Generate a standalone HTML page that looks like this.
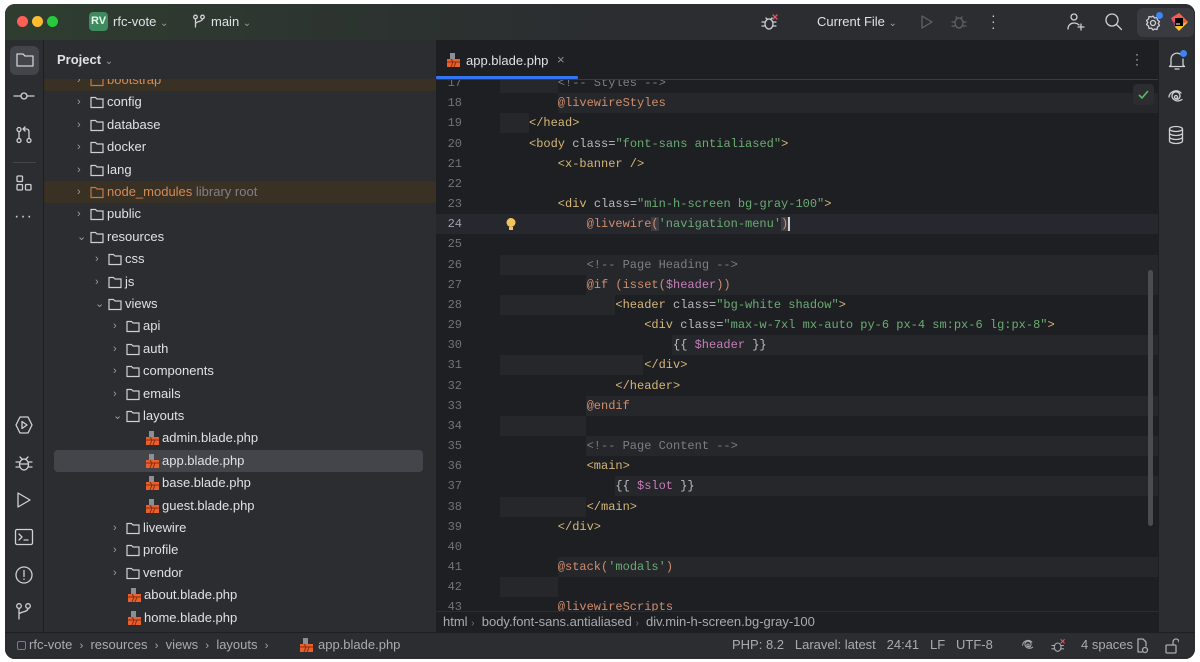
<!DOCTYPE html>
<html><head><meta charset="utf-8"><style>
*{margin:0;padding:0;box-sizing:border-box}
body{width:1200px;height:662px;background:#fff;position:relative;overflow:hidden;font-family:"Liberation Sans",sans-serif;font-size:13px;color:#dfe1e5}
.a{position:absolute}
#win{position:absolute;left:5px;top:4px;width:1190px;height:655px;border-radius:10px;overflow:hidden;background:#1e1f22}
.ico{position:absolute;stroke:#ced0d6;fill:none;stroke-width:1.3;stroke-linecap:round;stroke-linejoin:round}
.row{position:absolute;left:0;height:22px;line-height:22px;white-space:nowrap;font-size:13px;color:#dfe1e5}
.arr{position:absolute;top:0;color:#9a9da3;font-size:11px}
.code{position:absolute;left:0;width:1190px;height:20px;line-height:20px;font-family:"Liberation Mono",monospace;font-size:12px;white-space:pre;color:#bcbec4}
.ln{position:absolute;width:28px;text-align:right;left:429px;color:#6f737a;font-family:"Liberation Mono",monospace;font-size:12px}
.t{color:#d5b778}.at{color:#bababa}.s{color:#6aab73}.d{color:#cf8e6d}.c{color:#7a7e85}.v{color:#c77dbb}
.band{position:absolute;height:20px;background:#26272b}
.sb{position:absolute;top:0;height:26px;line-height:26px;font-size:13px;color:#a8abb0;white-space:nowrap}
</style></head><body>
<div id="win">
<div class="a" style="left:0;top:0;width:1190px;height:36px;background:linear-gradient(90deg,#2f3d30 0%,#2d3530 25%,#2b2d30 50%,#2b2d30 100%)"></div>
<div class="a" style="left:12px;top:12px;width:11px;height:11px;border-radius:50%;background:#fe5f57"></div>
<div class="a" style="left:27px;top:12px;width:11px;height:11px;border-radius:50%;background:#febc2e"></div>
<div class="a" style="left:42px;top:12px;width:11px;height:11px;border-radius:50%;background:#28c840"></div>
<div class="a" style="left:84px;top:8px;width:19px;height:19px;border-radius:4px;background:#3f8a5e;color:#e8f5ec;font-size:11px;font-weight:bold;text-align:center;line-height:19px">RV</div>
<div class="a" style="left:108px;top:10px;font-size:13px;color:#dfe1e5">rfc-vote <span style="color:#9a9da3;font-size:10px">&#8964;</span></div>
<svg class="ico" style="left:187px;top:10px" width="14" height="14" viewBox="0 0 14 14"><circle cx="3.5" cy="3" r="1.8"/><circle cx="10.5" cy="3" r="1.8"/><path d="M3.5 5v8M10.5 5c0 3-7 2-7 5"/></svg>
<div class="a" style="left:206px;top:10px;font-size:13px;color:#dfe1e5">main <span style="color:#9a9da3;font-size:10px">&#8964;</span></div>
<svg class="ico" style="left:756px;top:9px" width="18" height="18" viewBox="0 0 18 18"><ellipse cx="8" cy="11" rx="4" ry="5"/><path d="M1 9h3M12 9h3M1 13h3M12 13h3M5 5l1.5 1.5M11 5l-1.5 1.5"/><path d="M12 2l4 4M16 2l-4 4" stroke="#e55765"/></svg>
<div class="a" style="left:812px;top:10px;font-size:13px;color:#dfe1e5">Current File <span style="color:#9a9da3;font-size:10px">&#8964;</span></div>
<svg class="ico" style="left:915px;top:10px;stroke:#5f6166" width="14" height="16" viewBox="0 0 14 16"><path d="M2 2l10 6-10 6z"/></svg>
<svg class="ico" style="left:946px;top:9px;stroke:#5f6166" width="16" height="18" viewBox="0 0 16 18"><ellipse cx="8" cy="10" rx="4" ry="5"/><path d="M1 9h3M12 9h3M1 13h3M12 13h3M5 4l1.5 1.5M11 4l-1.5 1.5"/></svg>
<div class="a" style="left:986px;top:8px;color:#ced0d6;font-size:14px;line-height:6px;width:4px;text-align:center">·<br>·<br>·</div>
<svg class="ico" style="left:1061px;top:8px" width="20" height="20" viewBox="0 0 20 20"><circle cx="8" cy="5" r="3"/><path d="M2 17c0-4 3-6 6-6s4 1 5 2M15 12v6M12 15h6"/></svg>
<svg class="ico" style="left:1099px;top:8px" width="20" height="20" viewBox="0 0 20 20"><circle cx="8" cy="8" r="6"/><path d="M12.5 12.5l5 5"/></svg>
<div class="a" style="left:1132px;top:4px;width:57px;height:29px;border-radius:6px;background:#393b40"></div>
<svg class="ico" style="left:1139px;top:10px" width="18" height="18" viewBox="0 0 18 18"><circle cx="9" cy="9" r="2.5"/><path d="M9 2l1.5 2 2.5-.5.5 2.5 2 1.5-1.3 2 1.3 2-2 1.5-.5 2.5-2.5-.5L9 16l-1.5-2-2.5.5-.5-2.5-2-1.5 1.3-2-1.3-2 2-1.5.5-2.5 2.5.5z"/></svg>
<div class="a" style="left:1151px;top:8px;width:7px;height:7px;border-radius:50%;background:#3d85f0"></div>
<svg class="a" style="left:1164px;top:8px" width="20" height="20" viewBox="0 0 20 20"><path d="M10 1l9 9-9 9-4-4z" fill="#fcc31c"/><path d="M10 1l9 9H4L2 6z" fill="#f75b4b"/><path d="M2 6l4 9 13-5" fill="#e0418c" opacity=".6"/><rect x="6" y="6" width="8" height="8" fill="#000"/><rect x="7" y="11.5" width="4" height="1" fill="#fff"/></svg>
<div class="a" style="left:0;top:36px;width:39px;height:592px;background:#2b2d30;border-right:1px solid #1e1f22"></div>
<div class="a" style="left:5px;top:42px;width:29px;height:29px;border-radius:6px;background:#43454a"></div>
<svg class="ico" style="left:11px;top:48px" width="18" height="16" viewBox="0 0 18 16"><path d="M1 2h6l2 2h8v10H1z"/></svg>
<svg class="ico" style="left:8px;top:85px" width="22" height="14" viewBox="0 0 22 14"><circle cx="11" cy="7" r="3"/><path d="M1 7h7M14 7h7"/></svg>
<svg class="ico" style="left:10px;top:122px" width="18" height="18" viewBox="0 0 18 18"><circle cx="4" cy="3.5" r="2"/><circle cx="4" cy="14.5" r="2"/><circle cx="14" cy="14.5" r="2"/><path d="M4 5.5v7M14 12.5V6c0-2-1-3-3-3H8M10 1l-2 2 2 2"/></svg>
<div class="a" style="left:8px;top:158px;width:23px;height:1px;background:#43454a"></div>
<svg class="ico" style="left:10px;top:170px" width="18" height="18" viewBox="0 0 18 18"><rect x="2" y="2" width="5.5" height="5.5" rx="1"/><rect x="2" y="10.5" width="5.5" height="5.5" rx="1"/><rect x="10.5" y="10.5" width="5.5" height="5.5" rx="1"/></svg>
<div class="a" style="left:9px;top:204px;color:#ced0d6;font-size:16px;letter-spacing:1px">···</div>
<svg class="ico" style="left:9px;top:411px" width="20" height="20" viewBox="0 0 20 20"><path d="M6 2h8l4 8-4 8H6l-4-8z"/><path d="M8 6.5l5 3.5-5 3.5z"/></svg>
<svg class="ico" style="left:9px;top:449px" width="20" height="20" viewBox="0 0 20 20"><ellipse cx="10" cy="11.5" rx="4.5" ry="5.5"/><path d="M2 9h3.5M14.5 9H18M2 14h3.5M14.5 14H18M6 4l2 2M14 4l-2 2M5.5 11h9"/></svg>
<svg class="ico" style="left:10px;top:487px" width="18" height="18" viewBox="0 0 18 18"><path d="M3 2l12 7-12 7z"/></svg>
<svg class="ico" style="left:9px;top:524px" width="20" height="18" viewBox="0 0 20 18"><rect x="1.5" y="1.5" width="17" height="15" rx="1.5"/><path d="M5 6l3 3-3 3M10 12h4"/></svg>
<svg class="ico" style="left:9px;top:561px" width="20" height="20" viewBox="0 0 20 20"><circle cx="10" cy="10" r="8"/><path d="M10 5.5v6M10 14v.5"/></svg>
<svg class="ico" style="left:10px;top:598px" width="18" height="18" viewBox="0 0 18 18"><circle cx="4" cy="4" r="2.3"/><circle cx="13" cy="4" r="2.3"/><path d="M4 6.5V17M13 6.5c0 4-9 3-9 6"/></svg>
<div class="a" style="left:39px;top:36px;width:392px;height:592px;background:#2b2d30"></div>
<div class="a" style="left:52px;top:48px;font-size:13px;font-weight:bold;color:#dfe1e5">Project <span style="font-weight:normal;color:#9a9da3;font-size:10px">&#8964;</span></div>
<div class="a" style="left:39px;top:75px;width:392px;height:553px;overflow:hidden" id="tree"></div>
<div class="a" style="left:431px;top:36px;width:722px;height:40px;background:#1e1f22;border-bottom:1px solid #393b40;border-left:1px solid #1e1f22"></div>
<svg class="a" style="left:441px;top:49px" width="15" height="15" viewBox="0 0 15 15"><path d="M4 0h5v6H4z" fill="#8c8f94"/><path d="M1 6h13v8H1z" fill="#e8612c"/><path d="M1 9h13M5 6l2 3-2 5M10 9l-2 5" stroke="#8a2a10" stroke-width="1" fill="none"/></svg>
<div class="a" style="left:461px;top:49px;font-size:13px;color:#dfe1e5">app.blade.php</div>
<div class="a" style="left:552px;top:48px;font-size:13px;color:#8c8f94">×</div>
<div class="a" style="left:431px;top:72px;width:142px;height:3px;background:#3574f0;border-radius:1px"></div>
<div class="a" style="left:1130px;top:48px;color:#ced0d6;font-size:12px;line-height:5px">·<br>·<br>·</div>
<div class="a" id="code" style="left:0;top:76px;width:1153px;height:531px;overflow:hidden"></div>
<div class="a" style="left:1128px;top:80px;width:21px;height:21px;border-radius:4px;background:#2b2d30"></div>
<svg class="a" style="left:1132px;top:84px" width="13" height="13" viewBox="0 0 13 13"><path d="M2 7l3 3 6-7" stroke="#5fb865" stroke-width="1.6" fill="none"/></svg>
<div class="a" style="left:1143px;top:266px;width:5px;height:256px;border-radius:3px;background:#4a4c51"></div>
<div class="a" style="left:431px;top:607px;width:722px;height:21px;background:#1e1f22;border-top:1px solid #2b2d30"></div>
<div class="a" style="left:438px;top:610px;font-size:13px;color:#a8abb0;white-space:nowrap">html <span style="color:#6f737a;font-size:10px">›</span> &nbsp;body.font-sans.antialiased <span style="color:#6f737a;font-size:10px">›</span> &nbsp;div.min-h-screen.bg-gray-100</div>
<div class="a" style="left:1153px;top:36px;width:37px;height:592px;background:#2b2d30;border-left:1px solid #1e1f22"></div>
<svg class="ico" style="left:1162px;top:46px" width="20" height="22" viewBox="0 0 20 22"><path d="M4 15V9a6 6 0 0 1 9-5M16 9v6l1.5 1.5h-15L4 15M8 19h4"/></svg>
<div class="a" style="left:1175px;top:46px;width:7px;height:7px;border-radius:50%;background:#3d85f0"></div>
<svg class="ico" style="left:1162px;top:85px" width="18" height="18" viewBox="0 0 18 18"><path d="M9 9.5a1.5 1.5 0 1 0-1.5-1.5c0 2 3 3 4.5 1.5a4 4 0 1 0-7-3c0 5 6 7 10 4M14 4a7 7 0 0 0-12 4"/></svg>
<svg class="ico" style="left:1163px;top:121px" width="16" height="20" viewBox="0 0 16 20"><ellipse cx="8" cy="4" rx="6.5" ry="2.5"/><path d="M1.5 4v12c0 1.4 3 2.5 6.5 2.5s6.5-1.1 6.5-2.5V4M1.5 8c0 1.4 3 2.5 6.5 2.5s6.5-1.1 6.5-2.5M1.5 12c0 1.4 3 2.5 6.5 2.5s6.5-1.1 6.5-2.5"/></svg>
<div class="a" style="left:0;top:628px;width:1190px;height:27px;background:#2b2d30;border-top:1px solid #1e1f22"></div>
<div class="a" style="left:0;top:628px;width:1190px;height:27px">
<div class="a" style="left:12px;top:9px;width:9px;height:9px;border:1.5px solid #3d85f0;border-radius:2px"></div>
<div class="sb" style="left:24px">rfc-vote &nbsp;<span style="font-size:11px">›</span>&nbsp; resources &nbsp;<span style="font-size:11px">›</span>&nbsp; views &nbsp;<span style="font-size:11px">›</span>&nbsp; layouts &nbsp;<span style="font-size:11px">›</span></div>
<svg class="a" style="left:294px;top:6px" width="15" height="15" viewBox="0 0 15 15"><path d="M4 0h5v6H4z" fill="#8c8f94"/><path d="M1 6h13v8H1z" fill="#e8612c"/><path d="M1 9h13M5 6l2 3-2 5M10 9l-2 5" stroke="#8a2a10" stroke-width="1" fill="none"/></svg>
<div class="sb" style="left:313px">app.blade.php</div>
<div class="sb" style="left:727px">PHP: 8.2 &nbsp;&nbsp;Laravel: latest &nbsp;&nbsp;24:41 &nbsp;&nbsp;LF &nbsp;&nbsp;UTF-8</div>
<svg class="ico" style="left:1016px;top:7px;stroke:#a8abb0" width="14" height="14" viewBox="0 0 18 18"><path d="M9 9.5a1.5 1.5 0 1 0-1.5-1.5c0 2 3 3 4.5 1.5a4 4 0 1 0-7-3c0 5 6 7 10 4M14 4a7 7 0 0 0-12 4"/></svg>
<svg class="ico" style="left:1046px;top:6px;stroke:#a8abb0" width="15" height="15" viewBox="0 0 18 18"><ellipse cx="8" cy="11" rx="4" ry="5"/><path d="M1 9h3M12 9h3M1 13h3M12 13h3"/><path d="M12 2l4 4M16 2l-4 4" stroke="#e55765"/></svg>
<div class="sb" style="left:1076px">4 spaces</div>
<svg class="ico" style="left:1130px;top:6px;stroke:#a8abb0" width="14" height="16" viewBox="0 0 14 16"><path d="M3 1h5l3 3v4M3 1v13h4"/><circle cx="10" cy="12" r="2.5"/></svg>
<svg class="ico" style="left:1160px;top:6px;stroke:#a8abb0" width="14" height="16" viewBox="0 0 14 16"><rect x="1" y="7" width="10" height="8" rx="1"/><path d="M8 7V4a3 3 0 0 1 6 0"/></svg>
</div>
</div>
<script>
var fold='<svg width="14" height="13" viewBox="0 0 14 13" style="position:absolute;top:5px"><path d="M1 1.5h4.5l1.5 1.5h6v8.5H1z" fill="none" stroke="COL" stroke-width="1.2"/></svg>';
var blade='<svg width="15" height="15" viewBox="0 0 15 15" style="position:absolute;top:4px"><path d="M4 0h5v6H4z" fill="#8c8f94"/><path d="M1 6h13v8H1z" fill="#e8612c"/><path d="M1 9h13M5 6l2 3-2 5M10 9l-2 5" stroke="#8a2a10" stroke-width="1" fill="none"/></svg>';
var items=[[1,'f','bootstrap','>',0,'o'],[1,'f','config','>'],[1,'f','database','>'],[1,'f','docker','>'],[1,'f','lang','>'],[1,'f','node_modules','>',0,'n'],[1,'f','public','>'],[1,'f','resources','v'],[2,'f','css','>'],[2,'f','js','>'],[2,'f','views','v'],[3,'f','api','>'],[3,'f','auth','>'],[3,'f','components','>'],[3,'f','emails','>'],[3,'f','layouts','v'],[4,'b','admin.blade.php'],[4,'b','app.blade.php','',1],[4,'b','base.blade.php'],[4,'b','guest.blade.php'],[3,'f','livewire','>'],[3,'f','profile','>'],[3,'f','vendor','>'],[3,'b','about.blade.php'],[3,'b','home.blade.php']];
var h='';
items.forEach(function(it,i){
 var top=-10+i*22.4, lv=it[0], ax=33+(lv-1)*18, ix=ax+13, tx=ix+17;
 var bg='';
 if(it[5]) bg='background:#3a3125;width:392px;';
 if(it[4]) bg='background:#43454a;left:10px;width:369px;border-radius:4px;';
 var col='#ced0d6',tc='#dfe1e5';
 if(it[5]){col='#c07a45';tc='#d48a55';}
 var off=it[4]?-10:0;
 h+='<div class="row" style="top:'+top+'px;'+(bg?bg:'width:392px;')+'">';
 if(it[1]=='f'){
  h+='<span class="arr" style="left:'+(ax+off)+'px">'+(it[3]=='v'?'&#8964;':'&#8250;')+'</span>';
  h+='<span style="position:absolute;left:'+(ix+off)+'px;top:0">'+fold.replace('COL',col)+'</span>';
  h+='<span style="position:absolute;left:'+(tx+off)+'px;color:'+tc+'">'+it[2]+(it[5]=='n'?' <span style="color:#7f8187">library root</span>':'')+'</span>';
 } else {
  var bx=lv==4?101:83;
  h+='<span style="position:absolute;left:'+(bx+off)+'px;top:0">'+blade+'</span>';
  h+='<span style="position:absolute;left:'+(bx+17+off)+'px">'+it[2]+'</span>';
 }
 h+='</div>';
});
document.getElementById('tree').innerHTML=h;
function esc(s){return s.replace(/&/g,'&amp;').replace(/</g,'&lt;').replace(/>/g,'&gt;');}
function tag(t){return '<span class="t">'+esc(t)+'</span>';}
var L={
17:[4,'<span class="c">&lt;!-- Styles --&gt;</span>'],
18:[4,'<span class="d">@livewireStyles</span>'],
19:[0,tag('</head>')],
20:[0,tag('<body')+' <span class="at">class</span>=<span class="s">"font-sans antialiased"</span>'+tag('>')],
21:[4,tag('<x-banner />')],
23:[4,tag('<div')+' <span class="at">class</span>=<span class="s">"min-h-screen bg-gray-100"</span>'+tag('>')],
24:[8,'<span class="d">@livewire</span><span class="d" style="background:#3b3d42">(</span><span class="s">\'navigation-menu\'</span><span class="d" style="background:#3b3d42">)</span><span style="border-left:2px solid #ced0d6"></span>'],
26:[8,'<span class="c">&lt;!-- Page Heading --&gt;</span>'],
27:[8,'<span class="d">@if (isset(</span><span class="v">$header</span><span class="d">))</span>'],
28:[12,tag('<header')+' <span class="at">class</span>=<span class="s">"bg-white shadow"</span>'+tag('>')],
29:[16,tag('<div')+' <span class="at">class</span>=<span class="s">"max-w-7xl mx-auto py-6 px-4 sm:px-6 lg:px-8"</span>'+tag('>')],
30:[20,'{{ <span class="v">$header</span> }}'],
31:[16,tag('</div>')],
32:[12,tag('</header>')],
33:[8,'<span class="d">@endif</span>'],
35:[8,'<span class="c">&lt;!-- Page Content --&gt;</span>'],
36:[8,tag('<main>')],
37:[12,'{{ <span class="v">$slot</span> }}'],
38:[8,tag('</main>')],
39:[4,tag('</div>')],
41:[4,'<span class="d">@stack(</span><span class="s">\'modals\'</span><span class="d">)</span>'],
43:[4,'<span class="d">@livewireScripts</span>']
};
var bands=[[17,495,553],[18,553,1153],[19,495,524],[26,495,581],[26,581,1153],[27,581,1153],[28,495,610],[30,667,1153],[31,495,638],[33,581,1153],[34,495,581],[35,581,1153],[37,610,1153],[38,495,581],[41,553,1153],[42,495,553]];
var c='';
function tp(n){return Math.round(-7+(n-17)*20.17);}
c+='<div class="band" style="top:'+tp(24)+'px;left:431px;width:722px;background:#26282e"></div>';
bands.forEach(function(b){c+='<div class="band" style="top:'+tp(b[0])+'px;left:'+b[1]+'px;width:'+(b[2]-b[1])+'px"></div>';});
for(var n=17;n<=44;n++){
 c+='<div class="code" style="top:'+tp(n)+'px"><span class="ln" style="'+(n==24?'color:#a1a3ab':'')+'">'+n+'</span>';
 if(L[n]) c+='<span style="position:absolute;left:'+(524+L[n][0]*7.2)+'px">'+L[n][1]+'</span>';
 c+='</div>';
}
c+='<svg style="position:absolute;left:500px;top:'+(tp(24)+3)+'px" width="12" height="15" viewBox="0 0 12 15"><circle cx="6" cy="5.5" r="4.5" fill="#f2c55c"/><rect x="4" y="10" width="4" height="3" fill="#f2c55c"/></svg>';
document.getElementById('code').innerHTML=c;
</script>
</body></html>
